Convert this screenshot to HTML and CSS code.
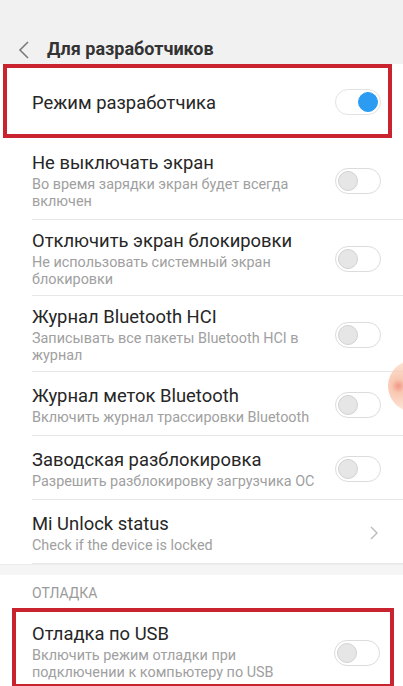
FILE: index.html
```
<!DOCTYPE html>
<html lang="ru">
<head>
<meta charset="utf-8">
<link rel="stylesheet" href="styles.css">
</head>
<body>
<div class="screen">
  <header class="topbar">
    <svg class="back" width="12" height="20" viewBox="0 0 12 20"><path d="M10 2 L2 10 L10 18" fill="none" stroke="#7a7a7a" stroke-width="1.6"/></svg>
    <h1 class="title">Для разработчиков</h1>
  </header>

  <div class="hl hl-top">
    <div class="row row-single">
      <div class="text"><div class="t">Режим разработчика</div></div>
      <span class="switch on"><span class="knob"></span></span>
    </div>
  </div>

  <div class="list">
    <div class="row first">
      <div class="text"><div class="t">Не выключать экран</div><div class="s">Во время зарядки экран будет всегда включен</div></div>
      <span class="switch"><span class="knob"></span></span>
    </div>
    <div class="row">
      <div class="text"><div class="t">Отключить экран блокировки</div><div class="s">Не использовать системный экран блокировки</div></div>
      <span class="switch"><span class="knob"></span></span>
    </div>
    <div class="row">
      <div class="text"><div class="t">Журнал Bluetooth HCI</div><div class="s">Записывать все пакеты Bluetooth HCI в журнал</div></div>
      <span class="switch"><span class="knob"></span></span>
    </div>
    <div class="row single">
      <div class="text"><div class="t">Журнал меток Bluetooth</div><div class="s">Включить журнал трассировки Bluetooth</div></div>
      <span class="switch"><span class="knob"></span></span>
    </div>
    <div class="row single">
      <div class="text"><div class="t">Заводская разблокировка</div><div class="s">Разрешить разблокировку загрузчика ОС</div></div>
      <span class="switch"><span class="knob"></span></span>
    </div>
    <div class="row single">
      <div class="text"><div class="t">Mi Unlock status</div><div class="s">Check if the device is locked</div></div>
      <svg class="chev" width="10" height="16" viewBox="0 0 10 16"><path d="M2 2 L8 8 L2 14" fill="none" stroke="#b8b8b8" stroke-width="1.3"/></svg>
    </div>
  </div>

  <div class="gap"></div>
  <div class="section">ОТЛАДКА</div>

  <div class="hl hl-bottom">
    <div class="row usb">
      <div class="text"><div class="t">Отладка по USB</div><div class="s">Включить режим отладки при подключении к компьютеру по USB</div></div>
      <span class="switch"><span class="knob"></span></span>
    </div>
  </div>

  <div class="ball"></div>
</div>
</body>
</html>
```
FILE: styles.css
```
* { box-sizing: border-box; margin: 0; padding: 0; }
html, body { width: 403px; height: 686px; overflow: hidden; }
body { background: #fff; font-family: Roboto, "Noto Sans", sans-serif; color: #262626; }
.screen { position: relative; width: 403px; height: 686px; overflow: hidden; background: #fff; }

.topbar { height: 64px; background: #f1f1f1; display: flex; align-items: flex-end; padding: 0 0 4px 18px; gap: 17px; }
.back { margin-bottom: 0; }
.title { font-size: 18px; font-weight: 700; color: #333; line-height: 22px; }

.hl { border: 4px solid #c8232f; background: #fff; }
.hl-top { margin: 0 11px 0 3px; height: 74px; }
.hl-top .row { height: 66px; padding: 3px 7px 0 25px; align-items: center; }
.hl-top .switch { margin-top: -2px; }
.hl-top .row::after { display: none; }

.row { position: relative; display: flex; align-items: center; padding: 10px 22px 8px 32px; min-height: 64px; }
.row::after { content: ""; position: absolute; left: 32px; right: 0; bottom: 0; height: 1px; background: #e8e8e8; }
.row.first { padding-top: 14px; padding-bottom: 10px; }
.text { flex: 1; min-width: 0; padding-right: 10px; }
.t { font-size: 18.4px; line-height: 22px; color: #262626; }
.s { font-size: 14.4px; line-height: 17px; color: #a0a0a0; margin-top: 2px; max-width: 290px; }

.switch { position: relative; flex: none; width: 46px; height: 26px; border: 1px solid #dcdcdc; border-radius: 13px; background: #fff; }
.knob { position: absolute; top: 2px; left: 2px; width: 20px; height: 20px; border-radius: 50%; background: #e6e6e6; border: 1px solid #d2d2d2; }
.switch.on { border-color: #e3e3e3; }
.switch.on .knob { left: auto; right: 2px; background: #2b9cf2; border-color: #2b9cf2; }

.chev { flex: none; margin-right: 2px; }

.gap { height: 11px; background: #f5f5f5; border-top: 1px solid #ececec; }
.section { height: 33px; font-size: 14px; color: #9a9a9a; padding: 10px 0 0 32px; line-height: 16px; background: #fff; }

.hl-bottom { margin: 0 9px 0 12px; height: 80px; }
.hl-bottom .row { padding: 11px 10px 0 16px; align-items: center; min-height: 0; }
.hl-bottom .row::after { display: none; }
.hl-bottom .switch { margin-top: 2px; }

.ball { position: absolute; left: 388px; top: 360px; width: 52px; height: 52px; border-radius: 50%; background: radial-gradient(circle at 20% 50%, rgba(240,140,118,0.9) 0, rgba(247,185,158,0.8) 14%, rgba(252,220,200,0.7) 50%, rgba(253,235,222,0.4) 100%); }
```
